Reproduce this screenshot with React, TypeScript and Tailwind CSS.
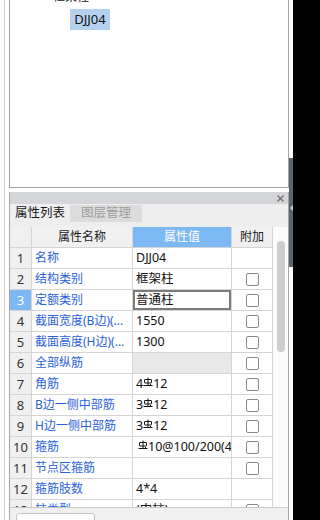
import React from "react";

type Row = {
  no: number;
  name: string;
  value?: string;
  // rebar values: "4" + symbol + "12"
  pre?: string;
  post?: string;
  check: boolean;
  active?: boolean;
  shaded?: boolean;
};

const rows: Row[] = [
  { no: 1, name: "名称", value: "DJJ04", check: false },
  { no: 2, name: "结构类别", value: "框架柱", check: true },
  { no: 3, name: "定额类别", value: "普通柱", check: true, active: true },
  { no: 4, name: "截面宽度(B边)(...", value: "1550", check: true },
  { no: 5, name: "截面高度(H边)(...", value: "1300", check: true },
  { no: 6, name: "全部纵筋", value: "", check: true, shaded: true },
  { no: 7, name: "角筋", pre: "4", post: "12", check: true },
  { no: 8, name: "B边一侧中部筋", pre: "3", post: "12", check: true },
  { no: 9, name: "H边一侧中部筋", pre: "3", post: "12", check: true },
  { no: 10, name: "箍筋", pre: "", post: "10@100/200(4)", check: true },
  { no: 11, name: "节点区箍筋", value: "", check: true },
  { no: 12, name: "箍筋肢数", value: "4*4", check: false },
  { no: 13, name: "柱类型", value: "(中柱)", check: true },
];

// grade III rebar symbol
function Rebar() {
  return (
    <svg width="10" height="10" viewBox="0 0 10 10" className="mb-[5px] shrink-0" fill="none" stroke="#111" strokeWidth="1">
      <path d="M5 0.5V8" />
      <rect x="1.5" y="2.5" width="7" height="3.5" rx="0.5" />
      <path d="M0.5 8.5H9.5" />
      <path d="M7.5 7V8.5" />
    </svg>
  );
}

function Checkbox() {
  return <div className="h-[13px] w-[13px] rounded-[2px] border border-[#8a8a8a] bg-white" />;
}

export default function App() {
  return (
    <div className="flex h-[520px] w-[320px] overflow-hidden bg-white font-['Noto_Sans','Noto_Sans_CJK_SC',sans-serif] text-[12px] text-[#111]">
      {/* left gutter */}
      <div className="flex w-[9px] shrink-0">
        <div className="w-[5px] border-r border-[#cfcfcf]" />
      </div>

      {/* panels */}
      <div className="flex w-[280px] shrink-0 flex-col">
        {/* tree panel */}
        <div className="h-[188px] shrink-0 border-x border-b border-[#a3a3a3] bg-white">
          <div className="-mt-[10px] h-[14px] pl-[43px] text-[12px] leading-[14px]">框架柱</div>
          <div className="mt-[5px] pl-[60px]">
            <span className="inline-block h-[21px] w-[40px] bg-[#b6d1ef] text-center text-[13px] leading-[21px]">DJJ04</span>
          </div>
        </div>

        {/* property panel */}
        <div className="mt-[4px] flex flex-1 flex-col border-x border-[#a3a3a3]">
          {/* title bar */}
          <div className="flex h-[12px] shrink-0 items-center justify-end bg-[#d5d6da] pr-[4px]">
            <svg width="7" height="7" viewBox="0 0 7 7" stroke="#707070" strokeWidth="1.4">
              <path d="M0.5 0.5L6.5 6.5M6.5 0.5L0.5 6.5" />
            </svg>
          </div>

          {/* tabs */}
          <div className="flex h-[23px] shrink-0 items-start bg-[#eeeeee] pt-[1px]">
            <div className="flex h-[17px] w-[60px] items-center justify-center text-[12.5px] text-[#1a1a1a]">属性列表</div>
            <div className="flex h-[17px] w-[72px] items-center justify-center bg-[#dcdcdc] text-[12.5px] text-[#9c9c9c]">图层管理</div>
          </div>

          {/* grid */}
          <div className="flex h-[281px] shrink-0 overflow-hidden border-b border-[#c9c9c9]">
            <div className="w-[263px] shrink-0">
              {/* header */}
              <div className="flex h-[21px] border-b border-[#d4d4d4] leading-[20px]">
                <div className="w-[22px] border-r border-[#d4d4d4] bg-[#f0f0f0]" />
                <div className="w-[101px] border-r border-[#d4d4d4] bg-[#f0f0f0] text-center text-[#222]">属性名称</div>
                <div className="w-[99px] border-r border-[#d4d4d4] bg-[#7bb8f4] text-center text-white">属性值</div>
                <div className="w-[41px] border-r border-[#d4d4d4] bg-[#f0f0f0] text-center text-[#222]">附加</div>
              </div>
              {rows.map((r) => (
                <div key={r.no} className="flex h-[21px] border-b border-[#d4d4d4] leading-[20px]">
                  <div
                    className={
                      r.active
                        ? "w-[22px] border-r border-[#d4d4d4] bg-[#7bb8f4] text-center text-[13px] text-white"
                        : "w-[22px] border-r border-[#d4d4d4] bg-[#f0f0f0] text-center text-[13px] text-[#333]"
                    }
                  >
                    {r.no}
                  </div>
                  <div className="w-[101px] overflow-hidden whitespace-nowrap border-r border-[#d4d4d4] pl-[3px] text-[#2a62d8]">
                    {r.name}
                  </div>
                  <div
                    className={
                      r.active
                        ? "flex w-[99px] items-center overflow-hidden whitespace-nowrap border-r border-[#d4d4d4] pl-[3px] text-[12.5px] ring-2 ring-inset ring-[#7a7a7a]"
                        : r.shaded
                          ? "flex w-[99px] items-center overflow-hidden whitespace-nowrap border-r border-[#d4d4d4] bg-[#e8e8e8] pl-[3px] text-[12.5px]"
                          : "flex w-[99px] items-center overflow-hidden whitespace-nowrap border-r border-[#d4d4d4] pl-[3px] text-[12.5px]"
                    }
                  >
                    {r.post !== undefined ? (
                      <>
                        {r.pre ? <span>{r.pre}</span> : <span className="w-[2px] shrink-0" />}
                        <Rebar />
                        <span>{r.post}</span>
                      </>
                    ) : (
                      r.value
                    )}
                  </div>
                  <div className="flex w-[41px] items-center justify-center border-r border-[#d4d4d4]">
                    {r.check && <Checkbox />}
                  </div>
                </div>
              ))}
            </div>
            {/* scrollbar */}
            <div className="flex-1 bg-[#fbfbfb] pl-[4px] pt-[14px]">
              <div className="h-[111px] w-[8px] rounded-full bg-[#cdcdcd]" />
            </div>
          </div>

          {/* bottom tabs */}
          <div className="flex-1 bg-[#f0f0f0] pl-[6px] pt-[5px]">
            <div className="flex h-[20px] w-[79px] items-center justify-center rounded-t-[3px] border border-[#c4c4c4] bg-white pt-[12px] text-[12px] text-[#222]">
              设置比例
            </div>
          </div>
        </div>
      </div>

      {/* splitter strip */}
      <div className="flex w-[4px] shrink-0 flex-col bg-white">
        <div className="h-[158px]" />
        <div className="flex h-[109px] flex-col bg-[#5c6670] pt-[47px]">
          <svg width="3" height="6" viewBox="0 0 3 6" className="ml-[1px]">
            <path d="M3 0L0 3L3 6Z" fill="#c9ced3" />
          </svg>
        </div>
      </div>

      <div className="flex-1 bg-black" />
    </div>
  );
}
